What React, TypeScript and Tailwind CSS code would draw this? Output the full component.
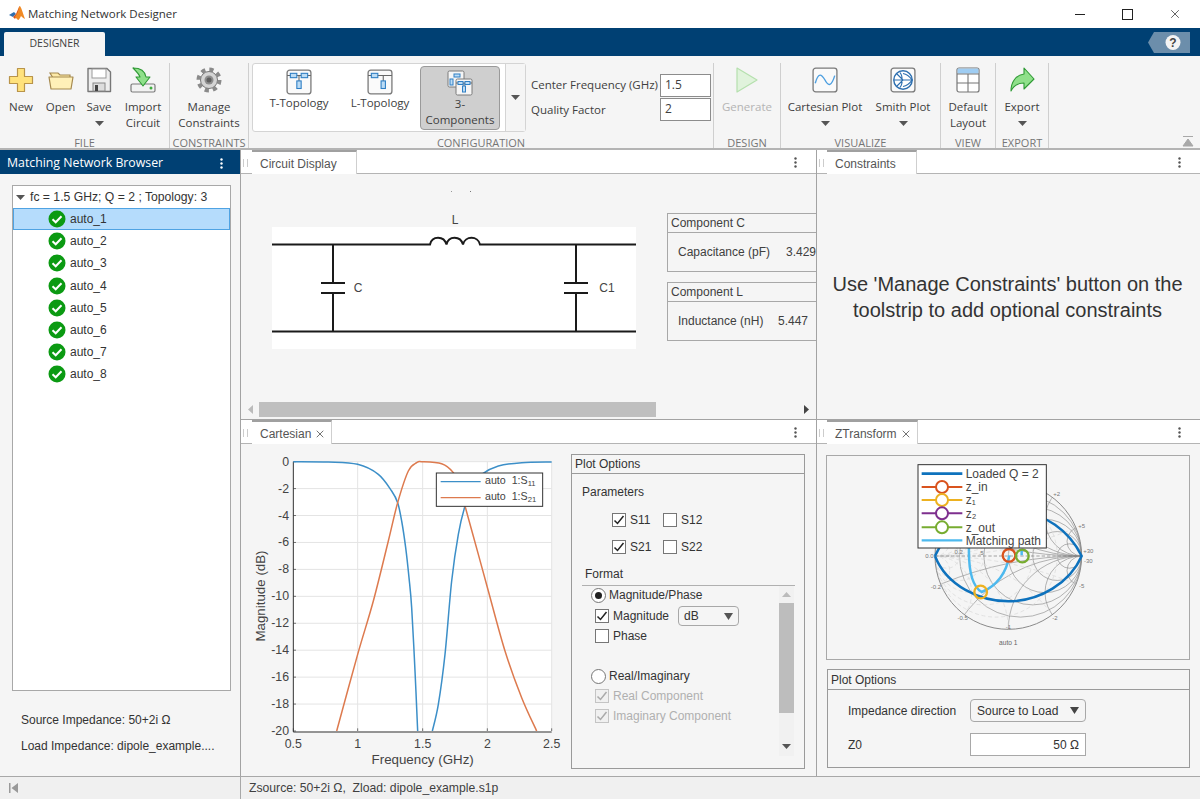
import React from 'react';
import { X } from 'lucide-react';

const ui = { fontFamily: '"Open Sans", "Noto Sans", sans-serif' };
const arial = { fontFamily: '"Liberation Sans", Arial, sans-serif' };

// catmull-rom through hand read points
function smooth(pts: number[][]) {
  let d = `M${pts[0][0]} ${pts[0][1]}`;
  for (let i = 0; i < pts.length - 1; i++) {
    const p0 = pts[Math.max(i - 1, 0)];
    const p1 = pts[i];
    const p2 = pts[i + 1];
    const p3 = pts[Math.min(i + 2, pts.length - 1)];
    const c1 = [p1[0] + (p2[0] - p0[0]) / 6, p1[1] + (p2[1] - p0[1]) / 6];
    const c2 = [p2[0] - (p3[0] - p1[0]) / 6, p2[1] - (p3[1] - p1[1]) / 6];
    d += ` C${c1[0]} ${c1[1]} ${c2[0]} ${c2[1]} ${p2[0]} ${p2[1]}`;
  }
  return d;
}

function Caret({ className = '' }: { className?: string }) {
  return (
    <svg width="9" height="5" viewBox="0 0 9 5" className={className}>
      <path d="M0 0h9L4.500 5z" fill="#555" />
    </svg>
  );
}

function MatlabLogo() {
  return (
    <svg width="18" height="18" viewBox="0 0 18 18">
      <path d="M1 10l5-3 2 2-3 3z" fill="#2f6fb0" />
      <path d="M5 12l3-3 3-7 1-1-2 8-3 5z" fill="#d9531e" />
      <path d="M11 2l1-1c2 3 3 8 5 13-2-1-3-2-4-3-1 2-2 4-3 4-1-1-2-2-3-3l3-5z" fill="#f08a24" />
    </svg>
  );
}

function IconNew() {
  return (
    <svg width="26" height="26" viewBox="0 0 26 26">
      <path d="M9.500 1.500h7v8h8v7h-8v8h-7v-8h-8v-7h8z" fill="#ffe27c" stroke="#b9944a" strokeWidth="1.200" strokeLinejoin="round" />
    </svg>
  );
}

function IconOpen() {
  return (
    <svg width="26" height="24" viewBox="0 0 26 24">
      <path d="M2 5h8l2 2h10v3H5z" fill="#fdeaa8" stroke="#a5894f" strokeWidth="1.200" />
      <path d="M1 9h24l-2 12H3z" fill="#fff0b8" stroke="#a5894f" strokeWidth="1.200" strokeLinejoin="round" />
    </svg>
  );
}

function IconSave() {
  return (
    <svg width="26" height="26" viewBox="0 0 26 26">
      <path d="M2 1.500h19l3.500 3.500v19.500h-22.500z" fill="#eee" stroke="#777" strokeWidth="1.400" strokeLinejoin="round" />
      <rect x="6" y="2" width="14" height="9" fill="#fff" stroke="#999" strokeWidth="1" />
      <rect x="7" y="16" width="12" height="8" fill="#ddd" stroke="#888" strokeWidth="1" />
      <rect x="9" y="18" width="3" height="6" fill="#444" />
    </svg>
  );
}

function IconImport() {
  return (
    <svg width="26" height="26" viewBox="0 0 26 26">
      <rect x="1" y="17" width="24" height="8" rx="1.500" fill="#f2f2f2" stroke="#7a7a7a" strokeWidth="1.200" />
      <circle cx="21" cy="21" r="1.500" fill="#3fae3f" />
      <path d="M3 1c7 0 12 3 13 9h4l-7 9-7-9h4c-1-3-4-6-7-9z" fill="#8fe08a" stroke="#2f9a35" strokeWidth="1.100" strokeLinejoin="round" />
    </svg>
  );
}

function IconGear() {
  return (
    <svg width="26" height="26" viewBox="0 0 26 26">
      <circle cx="13" cy="13" r="10.500" fill="none" stroke="#8a8a8a" strokeWidth="4" strokeDasharray="4.200 4.050" />
      <circle cx="13" cy="13" r="8.500" fill="#d4d4d4" stroke="#777" strokeWidth="1" />
      <circle cx="13" cy="13" r="4.500" fill="#8d8d8d" />
      <circle cx="13" cy="13" r="2.500" fill="#5f5f5f" />
    </svg>
  );
}

function Tile({ children, size = 26 }: { children: React.ReactNode; size?: number }) {
  return (
    <svg width={size} height={size} viewBox="0 0 24 24">
      <rect x="1" y="1" width="22" height="22" rx="2.500" fill="#fafafa" stroke="#7a7a7a" strokeWidth="1.200" />
      {children}
    </svg>
  );
}

const blue = { fill: '#bcdcf5', stroke: '#2f7fc4', strokeWidth: 1 };

function IconT() {
  return (
    <Tile>
      <path d="M1 6h22M12 6v12" stroke="#666" strokeWidth="1" />
      <rect x="4" y="4" width="6" height="4" {...blue} />
      <rect x="14" y="4" width="6" height="4" {...blue} />
      <rect x="10" y="11" width="4" height="7" {...blue} />
    </Tile>
  );
}

function IconL() {
  return (
    <Tile>
      <path d="M1 6h22M15 6v12" stroke="#666" strokeWidth="1" />
      <rect x="4" y="4" width="6" height="4" {...blue} />
      <rect x="13" y="11" width="4" height="7" {...blue} />
    </Tile>
  );
}

function Icon3() {
  return (
    <svg width="26" height="26" viewBox="0 0 26 26">
      <rect x="1" y="1" width="16" height="16" rx="1.500" fill="#f5f5f5" stroke="#7a7a7a" />
      <rect x="7" y="4" width="6" height="3" {...blue} />
      <rect x="3" y="9" width="3" height="6" {...blue} />
      <rect x="9" y="9" width="16" height="16" rx="1.500" fill="#f5f5f5" stroke="#7a7a7a" />
      <path d="M9 13h16M17 13v9" stroke="#666" strokeWidth="1" />
      <rect x="11" y="11.500" width="5" height="3" {...blue} />
      <rect x="18" y="11.500" width="5" height="3" {...blue} />
      <rect x="15.500" y="16" width="3" height="6" {...blue} />
    </svg>
  );
}

function IconPlay() {
  return (
    <svg width="24" height="26" viewBox="0 0 24 26">
      <path d="M2 1l20 12L2 25z" fill="#e0f3dc" stroke="#b5e0ae" strokeWidth="1.200" strokeLinejoin="round" />
    </svg>
  );
}

function IconCartesian() {
  return (
    <Tile>
      <path d="M3 15c3-11 6-8 9-3 3 6 6 6 9-4" fill="none" stroke="#4d9fe0" strokeWidth="1.300" />
    </Tile>
  );
}

function IconSmith() {
  return (
    <Tile>
      <circle cx="12" cy="12" r="8.500" fill="#fff" stroke="#2d6fb0" strokeWidth="1.300" />
      <path d="M3.500 12h17M12 12L6 6M12 12L6 18M12 6c5 1 7 4 8.500 6-1.500 2-3.500 5-8.500 6M9 5c3 3 3 11 0 14" fill="none" stroke="#2d6fb0" strokeWidth="1" />
    </Tile>
  );
}

function IconLayout() {
  return (
    <svg width="24" height="26" viewBox="0 0 24 26">
      <rect x="1" y="1" width="22" height="24" rx="2" fill="#fff" stroke="#777" strokeWidth="1.200" />
      <rect x="1.600" y="1.600" width="20.800" height="5" fill="#9fcdf3" />
      <path d="M1 7h22M1 16h22M12 7v18" stroke="#777" strokeWidth="1.100" />
    </svg>
  );
}

function IconExport() {
  return (
    <svg width="26" height="26" viewBox="0 0 26 26">
      <path d="M15 1l10 11-10 10v-6c-6 0-10 2-13 8C2 15 7 8 15 7z" fill="#8fe08a" stroke="#2f9a35" strokeWidth="1.100" strokeLinejoin="round" />
    </svg>
  );
}

function ToolButton({ icon, lines, caret, w, disabled }: { icon: React.ReactNode; lines: string[]; caret?: boolean; w: string; disabled?: boolean }) {
  return (
    <div className={`${w} flex shrink-0 flex-col items-center pt-[11px] text-[11.500px] leading-[16px] ${disabled ? 'text-[#b4b4b4]' : 'text-[#404040]'}`}>
      <div className="flex h-[26px] items-center justify-center">{icon}</div>
      <div className="mt-[6px] whitespace-nowrap text-center">
        {lines.map((l) => (
          <div key={l}>{l}</div>
        ))}
      </div>
      {caret && <Caret className="mt-[6px]" />}
    </div>
  );
}

function Section({ label, w, children }: { label: string; w: string; children: React.ReactNode }) {
  return (
    <div className={`${w} mt-[7px] flex shrink-0 flex-col border-r border-[#cfcfcf]`}>
      <div className="-mt-[7px] flex flex-1">{children}</div>
      <div className="h-[12px] text-center text-[11px] leading-[14px] whitespace-nowrap text-[#757575]">{label}</div>
    </div>
  );
}

function GalleryItem({ icon, lines, active }: { icon: React.ReactNode; lines: string[]; active?: boolean }) {
  return (
    <div className={`flex h-[64px] w-[80px] flex-col items-center rounded-[4px] pt-[3px] text-[11.500px] leading-[16px] text-[#404040] ${active ? 'border border-[#9a9a9a] bg-[#cfcfcf]' : ''}`}>
      {icon}
      <div className="text-center whitespace-nowrap">
        {lines.map((l) => (
          <div key={l}>{l}</div>
        ))}
      </div>
    </div>
  );
}

function Toolstrip() {
  return (
    <div className="flex h-[94px] border-b-2 border-[#b4b4b4] bg-[#f5f5f5]" style={ui}>
      <Section label="FILE" w="w-[170px]">
        <ToolButton w="w-[42px]" icon={<IconNew />} lines={['New']} />
        <ToolButton w="w-[37px]" icon={<IconOpen />} lines={['Open']} />
        <ToolButton w="w-[40px]" icon={<IconSave />} lines={['Save']} caret />
        <ToolButton w="w-[48px]" icon={<IconImport />} lines={['Import', 'Circuit']} />
      </Section>
      <Section label="CONSTRAINTS" w="w-[79px]">
        <ToolButton w="w-[78px]" icon={<IconGear />} lines={['Manage', 'Constraints']} />
      </Section>
      <Section label="CONFIGURATION" w="w-[465px]">
        <div className="ml-[3px] mt-[7px] flex h-[69px] w-[274px] items-center rounded-[3px] border border-[#d4d4d4] bg-white pl-[6px]">
          <GalleryItem icon={<IconT />} lines={['T-Topology']} />
          <div className="w-[1px]" />
          <GalleryItem icon={<IconL />} lines={['L-Topology']} />
          <GalleryItem active icon={<Icon3 />} lines={['3-', 'Components']} />
          <div className="ml-[5px] flex h-full flex-1 items-center justify-center border-l border-[#d4d4d4] bg-[#f5f5f5]">
            <Caret />
          </div>
        </div>
        <div className="ml-[5px] mt-[18px] text-[11.500px] text-[#404040]">
          <div className="flex h-[22px] items-center">
            <span className="w-[129px] whitespace-nowrap">Center Frequency (GHz)</span>
            <div className="flex h-[23px] w-[51px] items-center border border-[#8c8c8c] bg-white pl-[4px] text-[12px]">1.5</div>
          </div>
          <div className="mt-[2px] flex h-[22px] items-center">
            <span className="w-[129px] whitespace-nowrap pt-[2px]">Quality Factor</span>
            <div className="flex h-[23px] w-[51px] items-center border border-[#8c8c8c] bg-white pl-[4px] text-[12px]">2</div>
          </div>
        </div>
      </Section>
      <Section label="DESIGN" w="w-[67px]">
        <ToolButton w="w-[66px]" disabled icon={<IconPlay />} lines={['Generate']} />
      </Section>
      <Section label="VISUALIZE" w="w-[160px]">
        <ToolButton w="w-[88px]" icon={<IconCartesian />} lines={['Cartesian Plot']} caret />
        <ToolButton w="w-[68px]" icon={<IconSmith />} lines={['Smith Plot']} caret />
      </Section>
      <Section label="VIEW" w="w-[55px]">
        <ToolButton w="w-[54px]" icon={<IconLayout />} lines={['Default', 'Layout']} />
      </Section>
      <Section label="EXPORT" w="w-[53px]">
        <ToolButton w="w-[52px]" icon={<IconExport />} lines={['Export']} caret />
      </Section>
      <div className="flex flex-1 items-end justify-end pr-[6px] pb-[1px]">
        <svg width="12" height="11" viewBox="0 0 12 11">
          <path d="M1 0.500h10M6 3l5 7H1z" stroke="#a8a8a8" fill="#a8a8a8" />
        </svg>
      </div>
    </div>
  );
}

function Dots({ color = '#555' }: { color?: string }) {
  return (
    <svg width="3" height="11" viewBox="0 0 3 11">
      <circle cx="1.500" cy="1.500" r="1.200" fill={color} />
      <circle cx="1.500" cy="5.500" r="1.200" fill={color} />
      <circle cx="1.500" cy="9.500" r="1.200" fill={color} />
    </svg>
  );
}

function Panel({ title, closable, tabW, tabMl = 'ml-[3px]', children, className }: { title: string; closable?: boolean; tabW: string; tabMl?: string; children: React.ReactNode; className: string }) {
  return (
    <div className={`${className} flex flex-col border-l border-[#a3a3a3]`} style={arial}>
      <div className="flex h-[24px] shrink-0 items-end border-b border-[#b4b4b4] bg-white">
        <div className="mb-[6px] ml-[2px] h-[8px] w-[5px] border-x border-[#cccccc]" />
        <div className={`${tabW} ${tabMl} -mb-px flex h-[24px] items-center border-t-2 border-r border-t-[#a0a0a0] border-r-[#cfcfcf] bg-white pl-[8px] pt-[1px] text-[12px] text-[#555]`}>
          {title}
          {closable && <X size={12} strokeWidth={1.500} className="ml-[3px] text-[#444]" />}
        </div>
        <div className="mb-[5px] ml-auto mr-[19px]">
          <Dots />
        </div>
      </div>
      <div className="flex min-h-0 flex-1 flex-col overflow-hidden bg-[#f5f5f5]">{children}</div>
    </div>
  );
}

function CheckMark({ color }: { color: string }) {
  return (
    <svg width="12" height="12" viewBox="0 0 12 12">
      <path d="M1.500 6.500l3 3 6-7.500" fill="none" stroke={color} strokeWidth="1.500" />
    </svg>
  );
}

function Check({ on, label, disabled }: { on?: boolean; label: string; disabled?: boolean }) {
  return (
    <div className={`flex h-[16px] items-center text-[12px] ${disabled ? 'text-[#b0b0b0]' : 'text-[#333]'}`}>
      <div className={`flex h-[14px] w-[14px] items-center justify-center border ${disabled ? 'border-[#c4c4c4] bg-[#f0f0f0]' : 'border-[#767676] bg-white'}`}>
        {on && <CheckMark color={disabled ? '#aaa' : '#222'} />}
      </div>
      <span className="ml-[4px] whitespace-nowrap">{label}</span>
    </div>
  );
}

function Radio({ on, label }: { on?: boolean; label: string }) {
  return (
    <div className="flex h-[16px] items-center text-[12px] text-[#333]">
      <div className="flex h-[15px] w-[15px] items-center justify-center rounded-full border border-[#767676] bg-white">
        {on && <div className="h-[7px] w-[7px] rounded-full bg-[#222]" />}
      </div>
      <span className="ml-[3px] whitespace-nowrap">{label}</span>
    </div>
  );
}

function TreeRow({ name, selected }: { name: string; selected?: boolean }) {
  return (
    <div className={`flex h-[22.200px] items-center pl-[34px] text-[12px] text-[#333] ${selected ? 'border border-[#4fa3e3] bg-[#b5dcfc]' : 'border border-transparent'}`}>
      <svg width="18" height="18" viewBox="0 0 18 18">
        <circle cx="9" cy="9" r="8.500" fill="#0b9a12" />
        <path d="M4.500 9.300l3.200 3 5.800-6" fill="none" stroke="#fff" strokeWidth="2" />
      </svg>
      <span className="ml-[4px]">{name}</span>
    </div>
  );
}

function Browser() {
  const names = ['auto_1', 'auto_2', 'auto_3', 'auto_4', 'auto_5', 'auto_6', 'auto_7', 'auto_8'];
  return (
    <div className="flex w-[240px] shrink-0 flex-col bg-[#f5f5f5]" style={arial}>
      <div className="flex h-[24px] shrink-0 items-center justify-between bg-[#004073] pl-[7px] pr-[17px] pt-[2px] text-white" style={ui}>
        <span className="text-[12.300px]">Matching Network Browser</span>
        <Dots color="#fff" />
      </div>
      <div className="ml-[12px] mt-[11px] h-[506px] w-[219px] border border-[#a8a8a8] bg-white">
        <div className="flex h-[22px] items-center pl-[3px] text-[12.200px] text-[#333]">
          <Caret className="mr-[5px]" />
          fc = 1.5 GHz; Q = 2 ; Topology: 3
        </div>
        {names.map((n, i) => (
          <TreeRow key={n} name={n} selected={i === 0} />
        ))}
      </div>
      <div className="ml-[21px] mt-[22px] text-[12px] leading-[14px] text-[#333]">Source Impedance: 50+2i Ω</div>
      <div className="ml-[21px] mt-[12px] text-[12px] leading-[14px] text-[#333]">Load Impedance: dipole_example....</div>
    </div>
  );
}

function Circuit() {
  const ink = '#1a1a1a';
  return (
    <svg width="364" height="160" viewBox="272 190 364 160" className="shrink-0">
      <rect x="272" y="227" width="364" height="122" fill="#fff" />
      <path d="M272 244.500H430c2-9 14-9 16.500 0c2-9 14-9 16.500 0c2-9 15-9 17 0H636" fill="none" stroke={ink} strokeWidth="2" />
      <path d="M272 331.500h364M333 244v39M333 293v38M321 283h24M321 293h24M576 244v39M576 293v38M564 283h24M564 293h24" fill="none" stroke={ink} strokeWidth="2" />
      <text x="455" y="224" textAnchor="middle" fontSize="12" fill="#444" style={arial}>L</text>
      <text x="358" y="292" textAnchor="middle" fontSize="12" fill="#444" style={arial}>C</text>
      <text x="607" y="292" textAnchor="middle" fontSize="12" fill="#444" style={arial}>C1</text>
      <rect x="451" y="191" width="1" height="1" fill="#999" />
      <rect x="470" y="191" width="1" height="1" fill="#777" />
    </svg>
  );
}

function ComponentBox({ title, label, value, valueGap }: { title: string; label: string; value: string; valueGap: string }) {
  return (
    <div className="h-[59px] w-[170px] border border-[#a8a8a8] text-[12px] text-[#404040]">
      <div className="flex h-[19px] items-center border-b border-[#a8a8a8] pl-[3px]">{title}</div>
      <div className="mt-[10px] flex items-center whitespace-nowrap pl-[10px]">
        <span className={valueGap}>{label}</span>
        <span>{value}</span>
      </div>
    </div>
  );
}

function CircuitPanel() {
  return (
    <>
      <div className="flex min-h-0 flex-1 overflow-hidden pl-[31px] pt-[16px]">
        <Circuit />
        <div className="ml-[31px] mt-[23px] flex flex-col gap-[10px]">
          <ComponentBox title="Component C" label="Capacitance (pF)" value="3.429" valueGap="w-[108px]" />
          <ComponentBox title="Component L" label="Inductance (nH)" value="5.447" valueGap="w-[100px]" />
        </div>
      </div>
      <div className="mb-[2px] flex h-[15px] shrink-0 items-center">
        <div className="flex w-[18px] justify-center">
          <svg width="5" height="9" viewBox="0 0 5 9"><path d="M5 0v9L0 4.500z" fill="#bbb" /></svg>
        </div>
        <div className="h-[15px] w-[397px] bg-[#bfbfbf]" />
        <div className="ml-auto mr-[7px]">
          <svg width="5" height="9" viewBox="0 0 5 9"><path d="M0 0v9l5-4.500z" fill="#444" /></svg>
        </div>
      </div>
    </>
  );
}

function Chart() {
  const xs = [145, 338, 533, 727, 920];
  const xl = ['0.5', '1', '1.5', '2', '2.5'];
  const ys = Array.from({ length: 11 }, (_, i) => 62 + i * 80.8);
  const s11a = smooth([[145, 62], [250, 63], [338, 70], [400, 100], [440, 150], [458, 185], [470, 240], [482, 320], [492, 410], [500, 500], [510, 690], [518, 870]]);
  const s11b = smooth([[562, 870], [580, 790], [600, 640], [620, 420], [640, 280], [660, 195], [685, 130], [710, 100], [760, 75], [830, 65], [920, 63]]);
  const s21 = smooth([[275, 870], [338, 640], [385, 480], [430, 300], [458, 185], [490, 90], [515, 65], [530, 62], [590, 68], [625, 95], [645, 140], [660, 195], [700, 340], [730, 450], [780, 630], [830, 770], [875, 870]]);
  return (
    <svg width="330" height="333" viewBox="-12 9 990 999" className="shrink-0" style={arial}>
      <rect x="145" y="62" width="775" height="808" fill="#fff" />
      {xs.slice(1).map((x) => <path key={x} d={`M${x} 62V870`} stroke="#e4e4e4" strokeWidth="3" />)}
      {ys.slice(0, 10).map((y) => <path key={y} d={`M145 ${y}H920`} stroke="#e4e4e4" strokeWidth="3" />)}
      <path d="M145 62V873H920" fill="none" stroke="#333" strokeWidth="3" />
      {xs.map((x) => <path key={x} d={`M${x} 870v-8`} stroke="#333" strokeWidth="2" />)}
      {ys.map((y) => <path key={y} d={`M145 ${y}h8`} stroke="#333" strokeWidth="2" />)}
      <path d={s11a} fill="none" stroke="#3c8fc8" strokeWidth="4.500" />
      <path d={s11b} fill="none" stroke="#3c8fc8" strokeWidth="4.500" />
      <path d={s21} fill="none" stroke="#dd7a4e" strokeWidth="4.500" />
      {ys.map((y, i) => (
        <text key={y} x="132" y={y + 12} textAnchor="end" fontSize="37" fill="#444">{i === 0 ? '0' : `-${i * 2}`}</text>
      ))}
      {xs.map((x, i) => (
        <text key={x} x={x} y="920" textAnchor="middle" fontSize="37" fill="#444">{xl[i]}</text>
      ))}
      <text x="533" y="968" textAnchor="middle" fontSize="40" fill="#444">Frequency (GHz)</text>
      <text transform="translate(60 465) rotate(-90)" textAnchor="middle" fontSize="40" fill="#444">Magnitude (dB)</text>
      <rect x="574" y="96" width="319" height="100" fill="#fff" stroke="#333" strokeWidth="3" />
      <path d="M587 122h120" stroke="#3c8fc8" strokeWidth="4" />
      <path d="M587 170h120" stroke="#dd7a4e" strokeWidth="4" />
      <text x="720" y="130" fontSize="32" fill="#444">{'auto\u00a0\u00a01:S'}<tspan fontSize="23" dy="6">11</tspan></text>
      <text x="720" y="176" fontSize="32" fill="#444">{'auto\u00a0\u00a01:S'}<tspan fontSize="23" dy="6">21</tspan></text>
    </svg>
  );
}

function PlotOptions() {
  return (
    <div className="mt-[10px] h-[315px] w-[234px] shrink-0 border border-[#9a9a9a] text-[12px] text-[#333]">
      <div className="flex h-[19px] items-center border-b border-[#9a9a9a] pl-[3px]">Plot Options</div>
      <div className="ml-[10px] mt-[10px] leading-[16px]">Parameters</div>
      <div className="ml-[40px] mt-[12px] flex">
        <div className="w-[51px]"><Check on label="S11" /></div>
        <Check label="S12" />
      </div>
      <div className="ml-[40px] mt-[11px] flex">
        <div className="w-[51px]"><Check on label="S21" /></div>
        <Check label="S22" />
      </div>
      <div className="ml-[13px] mt-[11px] leading-[16px]">Format</div>
      <div className="ml-[10px] mr-[9px] mt-[3px] border-t border-[#b0b0b0]" />
      <div className="ml-[10px] flex h-[170px]">
        <div className="w-[197px]">
          <div className="ml-[9px] mt-[1px]"><Radio on label="Magnitude/Phase" /></div>
          <div className="ml-[13px] mt-[3px] flex h-[20px] items-center">
            <div className="w-[83px]"><Check on label="Magnitude" /></div>
            <div className="flex h-[20px] w-[61px] items-center justify-between rounded-[4px] border border-[#a8a8a8] bg-[#f5f5f5] px-[5px]">
              dB
              <svg width="9" height="7" viewBox="0 0 9 7"><path d="M0 0h9L4.500 7z" fill="#555" /></svg>
            </div>
          </div>
          <div className="ml-[13px] mt-[2px]"><Check label="Phase" /></div>
          <div className="ml-[9px] mt-[24px]"><Radio label="Real/Imaginary" /></div>
          <div className="ml-[13px] mt-[4px]"><Check on disabled label="Real Component" /></div>
          <div className="ml-[13px] mt-[4px]"><Check on disabled label="Imaginary Component" /></div>
        </div>
        <div className="flex w-[15px] flex-col bg-[#f1f1f1]">
          <div className="flex h-[17px] items-center justify-center">
            <svg width="9" height="5" viewBox="0 0 9 5"><path d="M0 5h9L4.500 0z" fill="#bbb" /></svg>
          </div>
          <div className="h-[110px] bg-[#bdbdbd]" />
          <div className="flex flex-1 items-end justify-center pb-[7px]">
            <Caret />
          </div>
        </div>
      </div>
    </div>
  );
}

function Smith() {
  const c = { x: 325, y: 300, r: 220 };
  const rs = [0.2, 0.5, 1, 2, 5];
  const xv = [0.2, 0.5, 1, 2, 5];
  const grid = '#8f8f8f';
  const labels: [number, number, string][] = [
    [88, 305, '0.0'], [108, 398, '-0.2'], [188, 493, '-0.5'], [325, 518, '-1'], [465, 493, '-2'], [545, 397, '-5'],
    [470, 120, '+2'], [545, 216, '+5'], [565, 291, '+30'], [565, 322, '-30'], [176, 293, '0.2'], [243, 297, '.5'],
  ];
  return (
    <svg width="362" height="203" viewBox="-219 0 1086 609" style={arial}>
      <defs>
        <clipPath id="disc"><circle cx={c.x} cy={c.y} r={c.r} /></clipPath>
      </defs>
      <g clipPath="url(#disc)" fill="none">
        {rs.map((r) => (
          <circle key={r} cx={c.x + (c.r * r) / (1 + r)} cy={c.y} r={c.r / (1 + r)} stroke={grid} strokeWidth="2" />
        ))}
        {xv.flatMap((x) => [1, -1].map((s) => (
          <circle key={`${x}${s}`} cx={c.x + c.r} cy={c.y + (s * c.r) / x} r={c.r / x} stroke={grid} strokeWidth="2" />
        )))}
        {rs.map((r) => (
          <circle key={r} cx={c.x - (c.r * r) / (1 + r)} cy={c.y} r={c.r / (1 + r)} stroke="#d8d8d8" strokeWidth="2" strokeDasharray="12 8" />
        ))}
        {xv.flatMap((x) => [1, -1].map((s) => (
          <circle key={`${x}${s}`} cx={c.x - c.r} cy={c.y + (s * c.r) / x} r={c.r / x} stroke="#d8d8d8" strokeWidth="2" strokeDasharray="12 8" />
        )))}
        <path d={`M${c.x - c.r} ${c.y}h${2 * c.r}`} stroke="#777" strokeWidth="2" strokeDasharray="10 6" />
      </g>
      <circle cx={c.x} cy={c.y} r={c.r} fill="none" stroke="#8a8a8a" strokeWidth="3" />
      {labels.map(([x, y, t]) => (
        <text key={t} x={x} y={y} textAnchor="middle" fontSize="18" fill="#777">{t}</text>
      ))}
      <text x="325" y="568" textAnchor="middle" fontSize="20" fill="#666">{'auto\u00a01'}</text>
      <path d="M105 300C140 390 240 436 325 436C420 436 510 380 545 300C510 230 440 165 325 165C220 165 140 220 105 300" fill="none" stroke="#0e72bd" strokeWidth="7.500" />
      <path d="M207 270C205 340 215 390 245 408C290 390 320 350 328 298M365 282V298" fill="none" stroke="#4db9ee" strokeWidth="7.500" />
      <circle cx="327" cy="298" r="19" fill="none" stroke="#d9531e" strokeWidth="7" />
      <circle cx="242" cy="408" r="19" fill="none" stroke="#edb120" strokeWidth="7" />
      <circle cx="367" cy="300" r="19" fill="none" stroke="#77ac30" strokeWidth="7" />
      <rect x="54" y="26" width="385" height="250" fill="#fff" stroke="#333" strokeWidth="3" />
      <path d="M65 53h122" stroke="#0e72bd" strokeWidth="8" />
      <path d="M65 93h122" stroke="#d9531e" strokeWidth="6" />
      <circle cx="126" cy="93" r="18" fill="#fff" stroke="#d9531e" strokeWidth="6" />
      <path d="M65 132h122" stroke="#edb120" strokeWidth="6" />
      <circle cx="126" cy="132" r="18" fill="#fff" stroke="#edb120" strokeWidth="6" />
      <path d="M65 172h122" stroke="#7e2f8e" strokeWidth="6" />
      <circle cx="126" cy="172" r="18" fill="#fff" stroke="#7e2f8e" strokeWidth="6" />
      <path d="M65 214h122" stroke="#77ac30" strokeWidth="6" />
      <circle cx="126" cy="214" r="18" fill="#fff" stroke="#77ac30" strokeWidth="6" />
      <path d="M65 253h122" stroke="#4db9ee" strokeWidth="7" />
      {['Loaded Q = 2', 'z_in', 'z₁', 'z₂', 'z_out', 'Matching path'].map((t, i) => (
        <text key={t} x="197" y={[66, 106, 145, 185, 227, 266][i]} fontSize="36" fill="#444">{t}</text>
      ))}
    </svg>
  );
}

function ZTransform() {
  return (
    <div className="ml-[9px] mt-[11px] w-[364px] text-[12px] text-[#333]">
      <div className="h-[205px] border border-[#a8a8a8]">
        <Smith />
      </div>
      <div className="ml-[1px] mt-[9px] h-[99px] border border-[#9a9a9a]">
        <div className="flex h-[20px] items-center border-b border-[#9a9a9a] pl-[3px]">Plot Options</div>
        <div className="ml-[20px] mt-[9px] flex h-[23px] items-center">
          <span className="w-[122px]">Impedance direction</span>
          <div className="flex h-[23px] w-[116px] items-center justify-between rounded-[4px] border border-[#a8a8a8] bg-[#f5f5f5] px-[6px]">
            Source to Load
            <svg width="9" height="7" viewBox="0 0 9 7"><path d="M0 0h9L4.500 7z" fill="#444" /></svg>
          </div>
        </div>
        <div className="ml-[20px] mt-[11px] flex h-[23px] items-center">
          <span className="w-[122px]">Z0</span>
          <div className="flex h-[23px] w-[116px] items-center justify-end border border-[#a8a8a8] bg-white px-[6px]">50 Ω</div>
        </div>
      </div>
    </div>
  );
}

export default function App() {
  return (
    <div className="flex h-[799px] w-[1200px] flex-col overflow-hidden bg-white">
      {/* title bar */}
      <div className="flex h-[28px] shrink-0 items-center pl-[8px] text-[11.500px] text-[#333]" style={ui}>
        <MatlabLogo />
        <span className="ml-[2px]">Matching Network Designer</span>
        <div className="ml-auto flex items-center gap-[37px] pr-[18px]">
          <div className="h-[1px] w-[10px] bg-[#222]" />
          <div className="h-[11px] w-[11px] border border-[#222]" />
          <X size={14} strokeWidth={1.200} className="-ml-[2px] text-[#222]" />
        </div>
      </div>

      {/* ribbon tabs */}
      <div className="flex h-[28px] shrink-0 items-end bg-[#004073] pl-[4px]" style={ui}>
        <div className="flex h-[24px] w-[101px] items-center justify-center rounded-t-[2px] bg-[#f5f5f5] text-[10.500px] text-[#404040]">DESIGNER</div>
        <div className="mb-[3px] ml-auto mr-[10px]">
          <svg width="42" height="21" viewBox="0 0 42 21">
            <path d="M6 0h36v21H6L0 10.500z" fill="#6c8eab" />
            <circle cx="25" cy="10.500" r="7.500" fill="#f4f4f4" />
            <text x="25" y="15" textAnchor="middle" fontSize="12" fontWeight="700" fill="#444" style={arial}>?</text>
          </svg>
        </div>
      </div>

      <Toolstrip />

      <div className="flex min-h-0 flex-1">
        <Browser />
        <div className="flex min-w-0 flex-1 flex-col">
          <div className="flex h-[269px] shrink-0">
            <Panel title="Circuit Display" tabW="w-[105px]" tabMl="ml-[4px]" className="w-[576px] shrink-0">
              <CircuitPanel />
            </Panel>
            <Panel title="Constraints" tabW="w-[90px]" className="flex-1">
              <div className="flex flex-1 items-start justify-center pr-[2px] pt-[97px] text-center text-[20px] leading-[26px] text-[#333]">
                <p>Use 'Manage Constraints' button on the<br />toolstrip to add optional constraints</p>
              </div>
            </Panel>
          </div>
          <div className="flex min-h-0 flex-1 border-t border-[#a3a3a3]">
            <Panel title="Cartesian" closable tabW="w-[80px]" tabMl="ml-[4px]" className="w-[576px] shrink-0">
              <div className="flex">
                <Chart />
                <PlotOptions />
              </div>
            </Panel>
            <Panel title="ZTransform" closable tabW="w-[91px]" className="flex-1">
              <ZTransform />
            </Panel>
          </div>
        </div>
      </div>

      {/* status bar */}
      <div className="flex h-[23px] shrink-0 items-center border-t border-[#a8a8a8] bg-[#f0f0f0] text-[12.200px] text-[#404040]" style={arial}>
        <div className="flex h-full w-[241px] items-center border-r border-[#a8a8a8] pl-[8px]">
          <svg width="10" height="10" viewBox="0 0 10 10"><path d="M1 0v10h1.500V0zM10 0v10L3.500 5z" fill="#999" /></svg>
        </div>
        <span className="ml-[8px] whitespace-pre">Zsource: 50+2i Ω,  Zload: dipole_example.s1p</span>
      </div>
    </div>
  );
}
